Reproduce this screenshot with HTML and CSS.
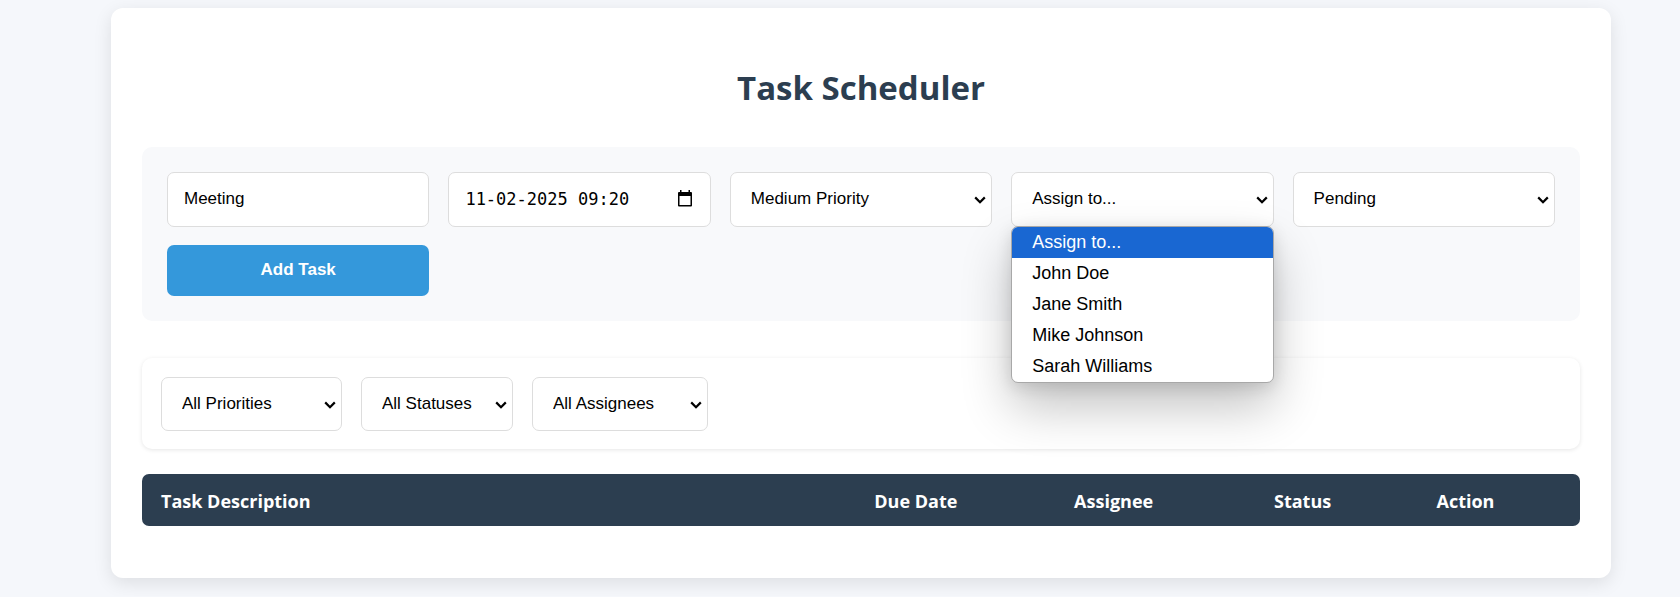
FILE: index.html
```html
<!DOCTYPE html>
<html lang="en">
<head>
<meta charset="utf-8">
<title>Task Scheduler</title>
<link rel="stylesheet" href="styles.css">
</head>
<body>
<svg class="defs" aria-hidden="true">
  <symbol id="chevron" viewBox="0 0 12 8"><path d="M1.2 1.4 6 6.2 10.8 1.4" fill="none" stroke="currentColor" stroke-width="2.2"/></symbol>
</svg>
<main class="card">
  <h1 class="title">Task Scheduler</h1>

  <form class="task-form">
    <input class="control" type="text" value="Meeting" aria-label="Task description">
    <div class="field">
      <input class="control date" type="text" value="11-02-2025 09:20" aria-label="Due date">
      <button class="calendar" type="button" aria-label="Open calendar">
        <svg viewBox="0 0 14 17" width="14" height="17" aria-hidden="true"><path d="M2 0h1.500v2h7V0h1.500v2h1a1 1 0 0 1 1 1v12.500a1 1 0 0 1-1 1H1a1 1 0 0 1-1-1V3a1 1 0 0 1 1-1h1zM1.500 6v9h11V6z" fill="currentColor" fill-rule="evenodd"/></svg>
      </button>
    </div>
    <div class="field">
      <select class="control" aria-label="Priority">
        <option>Low Priority</option>
        <option selected>Medium Priority</option>
        <option>High Priority</option>
      </select>
      <svg class="chevron"><use href="#chevron"/></svg>
    </div>
    <div class="field">
      <select class="control" aria-label="Assignee">
        <option>Assign to...</option>
        <option>John Doe</option>
        <option>Jane Smith</option>
        <option>Mike Johnson</option>
        <option>Sarah Williams</option>
      </select>
      <svg class="chevron"><use href="#chevron"/></svg>
      <ul class="menu" role="listbox" aria-label="Assignee options">
        <li class="option active" role="option" aria-selected="true">Assign to...</li>
        <li class="option" role="option">John Doe</li>
        <li class="option" role="option">Jane Smith</li>
        <li class="option" role="option">Mike Johnson</li>
        <li class="option" role="option">Sarah Williams</li>
      </ul>
    </div>
    <div class="field">
      <select class="control" aria-label="Status">
        <option>Pending</option>
        <option>Completed</option>
      </select>
      <svg class="chevron"><use href="#chevron"/></svg>
    </div>
    <button class="add" type="button">Add Task</button>
  </form>

  <section class="filters">
    <div class="field">
      <select class="control" aria-label="Filter by priority">
        <option>All Priorities</option>
        <option>Low Priority</option>
        <option>Medium Priority</option>
        <option>High Priority</option>
      </select>
      <svg class="chevron"><use href="#chevron"/></svg>
    </div>
    <div class="field">
      <select class="control" aria-label="Filter by status">
        <option>All Statuses</option>
        <option>Pending</option>
        <option>Completed</option>
      </select>
      <svg class="chevron"><use href="#chevron"/></svg>
    </div>
    <div class="field">
      <select class="control" aria-label="Filter by assignee">
        <option>All Assignees</option>
        <option>John Doe</option>
        <option>Jane Smith</option>
        <option>Mike Johnson</option>
        <option>Sarah Williams</option>
      </select>
      <svg class="chevron"><use href="#chevron"/></svg>
    </div>
  </section>

  <table class="tasks">
    <thead>
      <tr>
        <th class="col-task">Task Description</th>
        <th class="col-wide">Due Date</th>
        <th class="col-wide">Assignee</th>
        <th>Status</th>
        <th>Action</th>
      </tr>
    </thead>
  </table>
</main>
</body>
</html>
```
FILE: styles.css
```css
* {
  box-sizing: border-box;
}

body {
  margin: 0;
  padding: 8px 69px 18px 111px;
  background: #f5f7fb;
  color: #2c3e50;
  font-family: "Segoe UI", "Open Sans", sans-serif;
}

.defs {
  display: none;
}

.card {
  max-width: 1500px;
  padding: 56px 31px 52px;
  background: #fff;
  border-radius: 12px;
  box-shadow: 0 5px 18px rgba(0, 0, 0, 0.1);
}

.title {
  margin: 0 0 35px;
  font-size: 33px;
  line-height: 48px;
  font-weight: 700;
  text-align: center;
}

.task-form {
  display: grid;
  grid-template-columns: repeat(5, minmax(0, 1fr));
  gap: 18px 19px;
  padding: 25px;
  margin-bottom: 37px;
  background: #f8f9fb;
  border-radius: 10px;
}

.field {
  position: relative;
}

.control {
  display: block;
  width: 100%;
  height: 55px;
  padding: 0 16px 2px;
  border: 1px solid #ddd;
  border-radius: 7px;
  background: #fff;
  color: #000;
  font-family: Arial, "Liberation Sans", sans-serif;
  font-size: 17px;
}

select.control {
  appearance: none;
  padding: 0 40px 2px 20px;
}

.date {
  font-family: "DejaVu Sans Mono", monospace;
}

.calendar {
  position: absolute;
  top: 18px;
  right: 19px;
  display: flex;
  padding: 0;
  border: 0;
  background: none;
  color: #000;
}

.chevron {
  position: absolute;
  top: 24px;
  right: 6px;
  width: 12px;
  height: 8px;
  color: #000;
  pointer-events: none;
}

.menu {
  position: absolute;
  z-index: 1;
  top: 54px;
  left: 0;
  right: 0;
  margin: 0;
  padding: 0;
  overflow: hidden;
  list-style: none;
  background: #fff;
  border: 1px solid #a8a8a8;
  border-radius: 7px;
  box-shadow: 0 24px 50px rgba(0, 0, 0, 0.24), 0 4px 16px rgba(0, 0, 0, 0.12);
}

.option {
  padding: 0 20px;
  color: #000;
  font-family: Arial, "Liberation Sans", sans-serif;
  font-size: 18px;
  line-height: 31px;
}

.option.active {
  background: #1967d2;
  color: #fff;
}

.add {
  height: 51px;
  padding: 0 16px 2px;
  border: 0;
  border-radius: 7px;
  background: #3498db;
  color: #fff;
  font-family: Arial, "Liberation Sans", sans-serif;
  font-size: 17px;
  font-weight: 700;
}

.filters {
  display: flex;
  gap: 19px;
  padding: 19px 19px 18px;
  margin-bottom: 25px;
  border-radius: 10px;
  box-shadow: 0 1px 4px rgba(0, 0, 0, 0.1);
}

.filters .control {
  height: 54px;
}

.tasks {
  width: 100%;
  table-layout: fixed;
  border-spacing: 0;
  background: #2c3e50;
  border-radius: 7px;
  color: #fff;
}

.tasks th {
  padding: 15px 19px 13px;
  font-size: 18px;
  line-height: 24px;
  font-weight: 700;
  text-align: left;
}

.tasks .col-task {
  width: 49.6%;
}

.tasks .col-wide {
  width: 13.9%;
}
```
